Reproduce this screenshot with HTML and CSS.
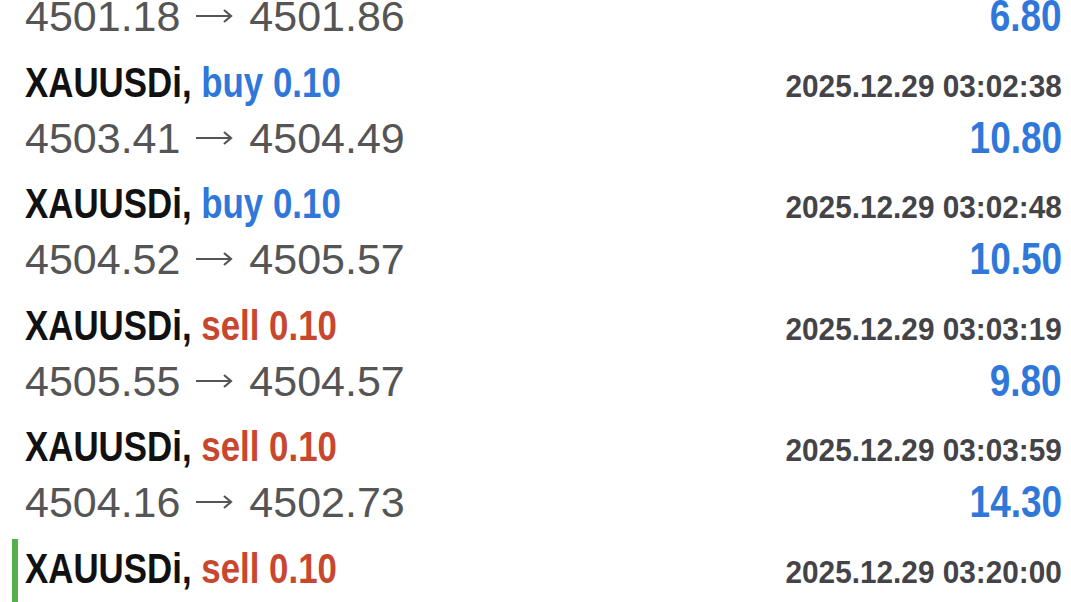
FILE: index.html
```html
<!DOCTYPE html>
<html lang="en">
<head>
    <meta charset="UTF-8">
    <meta name="viewport" content="width=device-width, initial-scale=1.0">
    <title>History</title>
    <link rel="stylesheet" href="styles.css">
</head>
<body>

    <div id="history">
        <div class="trade">
            <div class="row">
                <span class="symbol">XAUUSDi, <span class="buy">buy 0.10</span></span>
                <span class="time">2025.12.29 03:02:21</span>
            </div>
            <div class="row">
                <span class="prices">4501.18 <svg class="arrow" width="40" height="18" viewBox="0 0 40 18"><path d="M2 9H37M30 3l7 6-7 6"/></svg> 4501.86</span>
                <span class="profit">6.80</span>
            </div>
        </div>

        <div class="trade">
            <div class="row">
                <span class="symbol">XAUUSDi, <span class="buy">buy 0.10</span></span>
                <span class="time">2025.12.29 03:02:38</span>
            </div>
            <div class="row">
                <span class="prices">4503.41 <svg class="arrow" width="40" height="18" viewBox="0 0 40 18"><path d="M2 9H37M30 3l7 6-7 6"/></svg> 4504.49</span>
                <span class="profit">10.80</span>
            </div>
        </div>

        <div class="trade">
            <div class="row">
                <span class="symbol">XAUUSDi, <span class="buy">buy 0.10</span></span>
                <span class="time">2025.12.29 03:02:48</span>
            </div>
            <div class="row">
                <span class="prices">4504.52 <svg class="arrow" width="40" height="18" viewBox="0 0 40 18"><path d="M2 9H37M30 3l7 6-7 6"/></svg> 4505.57</span>
                <span class="profit">10.50</span>
            </div>
        </div>

        <div class="trade">
            <div class="row">
                <span class="symbol">XAUUSDi, <span class="sell">sell 0.10</span></span>
                <span class="time">2025.12.29 03:03:19</span>
            </div>
            <div class="row">
                <span class="prices">4505.55 <svg class="arrow" width="40" height="18" viewBox="0 0 40 18"><path d="M2 9H37M30 3l7 6-7 6"/></svg> 4504.57</span>
                <span class="profit">9.80</span>
            </div>
        </div>

        <div class="trade">
            <div class="row">
                <span class="symbol">XAUUSDi, <span class="sell">sell 0.10</span></span>
                <span class="time">2025.12.29 03:03:59</span>
            </div>
            <div class="row">
                <span class="prices">4504.16 <svg class="arrow" width="40" height="18" viewBox="0 0 40 18"><path d="M2 9H37M30 3l7 6-7 6"/></svg> 4502.73</span>
                <span class="profit">14.30</span>
            </div>
        </div>

        <div class="trade active">
            <div class="row">
                <span class="symbol">XAUUSDi, <span class="sell">sell 0.10</span></span>
                <span class="time">2025.12.29 03:20:00</span>
            </div>
            <div class="row">
                <span class="prices">4506.02 <svg class="arrow" width="40" height="18" viewBox="0 0 40 18"><path d="M2 9H37M30 3l7 6-7 6"/></svg> 4505.10</span>
                <span class="profit">9.20</span>
            </div>
        </div>
    </div>

</body>
</html>
```

FILE: styles.css
```css
body { margin: 0; background: #fff; font-family: "Liberation Sans", Arial, sans-serif; overflow: hidden; }
#history { margin-top: -69px; }
.trade { margin-left: 12px; border-left: 6px solid transparent; padding: 6px 9px 5.5px 7px; }
.trade.active { border-left-color: #55b04c; }
.row { display: flex; justify-content: space-between; align-items: baseline; white-space: nowrap; }
.row:first-child { height: 48px; line-height: 48px; }
.row:last-child { height: 62px; line-height: 62px; }
.symbol, .time, .profit { display: inline-block; font-weight: bold; }
.symbol { font-size: 42px; color: #111; transform: scaleX(0.83); transform-origin: left; }
.buy { color: #2f78d9; }
.sell { color: #c8472f; }
.time { font-size: 31px; color: #444448; transform: scaleX(0.96); transform-origin: right; }
.prices { font-size: 43px; color: #555; }
.arrow { vertical-align: 6px; margin: 0 3px 0 2px; fill: none; stroke: #555; stroke-width: 2.2; }
.profit { font-size: 44px; color: #2f78d9; transform: scaleX(0.84); transform-origin: right; }
```
